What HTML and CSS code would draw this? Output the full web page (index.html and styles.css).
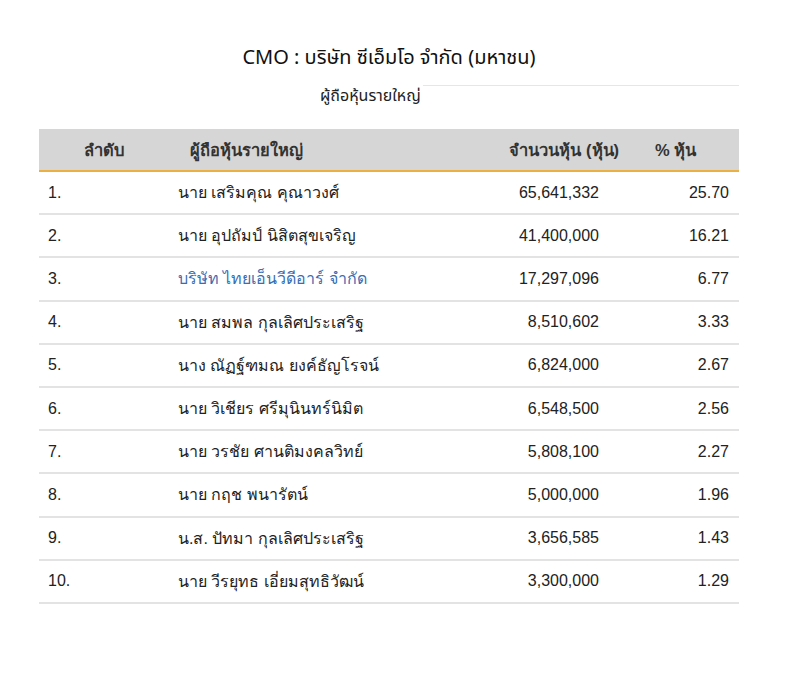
FILE: index.html
```html
<!DOCTYPE html>
<html lang="th">
<head>
<meta charset="utf-8">
<title>CMO ผู้ถือหุ้นรายใหญ่</title>
<link rel="stylesheet" href="styles.css">
</head>
<body>
<div class="wrap">
  <h1 class="title">CMO : บริษัท ซีเอ็มโอ จำกัด (มหาชน)</h1>
  <div class="subrow">
    <span class="subtitle">ผู้ถือหุ้นรายใหญ่</span>
    <span class="subline"></span>
  </div>
  <div class="table">
    <div class="row head">
      <div class="c c1">ลำดับ</div>
      <div class="c c2">ผู้ถือหุ้นรายใหญ่</div>
      <div class="c c3">จำนวนหุ้น (หุ้น)</div>
      <div class="c c4">% หุ้น</div>
    </div>
    <div class="row"><div class="c c1">1.</div><div class="c c2">นาย เสริมคุณ คุณาวงศ์</div><div class="c c3">65,641,332</div><div class="c c4">25.70</div></div>
    <div class="row"><div class="c c1">2.</div><div class="c c2">นาย อุปถัมป์ นิสิตสุขเจริญ</div><div class="c c3">41,400,000</div><div class="c c4">16.21</div></div>
    <div class="row"><div class="c c1">3.</div><div class="c c2 link">บริษัท ไทยเอ็นวีดีอาร์ จำกัด</div><div class="c c3">17,297,096</div><div class="c c4">6.77</div></div>
    <div class="row"><div class="c c1">4.</div><div class="c c2">นาย สมพล กุลเลิศประเสริฐ</div><div class="c c3">8,510,602</div><div class="c c4">3.33</div></div>
    <div class="row"><div class="c c1">5.</div><div class="c c2">นาง ณัฏฐ์ฑมณ ยงค์ธัญโรจน์</div><div class="c c3">6,824,000</div><div class="c c4">2.67</div></div>
    <div class="row"><div class="c c1">6.</div><div class="c c2">นาย วิเชียร ศรีมุนินทร์นิมิต</div><div class="c c3">6,548,500</div><div class="c c4">2.56</div></div>
    <div class="row"><div class="c c1">7.</div><div class="c c2">นาย วรชัย ศานติมงคลวิทย์</div><div class="c c3">5,808,100</div><div class="c c4">2.27</div></div>
    <div class="row"><div class="c c1">8.</div><div class="c c2">นาย กฤช พนารัตน์</div><div class="c c3">5,000,000</div><div class="c c4">1.96</div></div>
    <div class="row"><div class="c c1">9.</div><div class="c c2">น.ส. ปัทมา กุลเลิศประเสริฐ</div><div class="c c3">3,656,585</div><div class="c c4">1.43</div></div>
    <div class="row"><div class="c c1">10.</div><div class="c c2">นาย วีรยุทธ เอี่ยมสุทธิวัฒน์</div><div class="c c3">3,300,000</div><div class="c c4">1.29</div></div>
  </div>
</div>
</body>
</html>
```
FILE: styles.css
```css
html, body {
  margin: 0;
  padding: 0;
  background: #fff;
}
body {
  font-family: "Liberation Sans", Arial, sans-serif;
  color: #222;
}
.wrap {
  width: 700px;
  margin-left: 39px;
  padding-top: 44px;
}
.title {
  margin: 0;
  text-align: center;
  font-family: "Noto Sans Thai", "Noto Sans", "Liberation Sans", sans-serif;
  font-size: 20px;
  font-weight: normal;
  line-height: 28px;
  color: #111;
}
.subrow {
  display: flex;
  align-items: flex-start;
  padding-left: 281px;
  margin-top: 12px;
  height: 45px;
}
.subtitle {
  font-family: "Noto Sans Thai", "Noto Sans", "Liberation Sans", sans-serif;
  font-size: 16px;
  line-height: 24px;
  color: #222;
}
.subline {
  flex: 1;
  margin-top: 1px;
  margin-left: 2px;
  border-top: 1px solid #e6e6e6;
}
.table {
  display: flex;
  flex-direction: column;
}
.row {
  display: grid;
  grid-template-columns: 131px 230px 220px 119px;
  height: 43.2px;
  box-sizing: border-box;
  border-bottom: 2px solid #e3e3e3;
  align-items: center;
  font-size: 16px;
}
.head {
  height: 43px;
  background: #d6d6d6;
  border-bottom: 2px solid #eab041;
  font-weight: bold;
  font-size: 16.5px;
  color: #333;
}
.c1 { padding-left: 9px; }
.c2 { padding-left: 8px; }
.c3 { text-align: right; padding-right: 21px; }
.c4 { text-align: right; padding-right: 10px; }
.head .c1 { padding-left: 45px; }
.head .c2 { padding-left: 20px; }
.head .c3 { padding-right: 1px; }
.head .c4 { text-align: left; padding-left: 35px; padding-right: 0; }
.link { color: #3a6db3; }
```
